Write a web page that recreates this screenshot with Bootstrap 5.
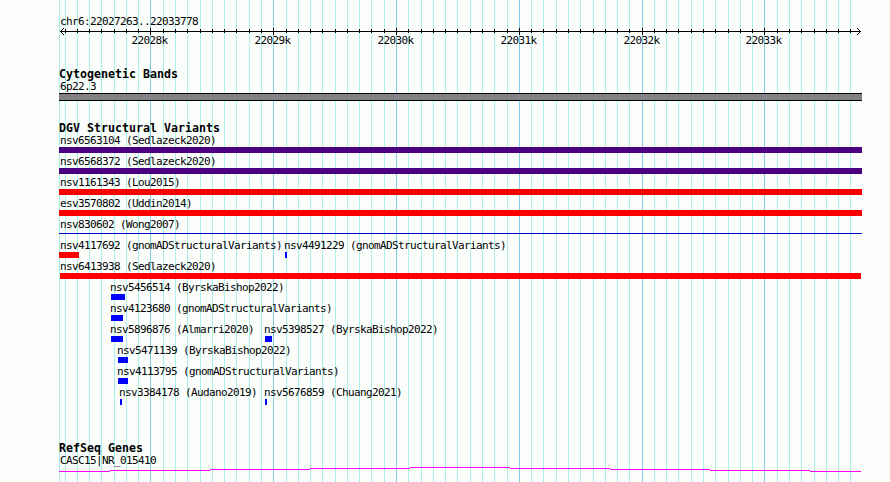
<!DOCTYPE html>
<html lang="en">
<head>
    <meta charset="UTF-8">
    <title>chr6:22027263..22033778</title>
    <meta name="viewport" content="width=device-width, initial-scale=1">
    <link href="https://cdn.jsdelivr.net/npm/bootstrap@5.3.0/dist/css/bootstrap.min.css" rel="stylesheet">
    <style>
        body {
            background-color: #fcfefc;
            font-family: "DejaVu Sans Mono", "Liberation Mono", monospace;
            font-size: 11px;
            line-height: 13px;
            letter-spacing: -0.622px;
            color: #000;
        }

        .browser {
            width: 890px;
            height: 482px;
        }

        .gridlines {
            z-index: -1;
        }

        .panel {
            padding-left: 59px;
            padding-top: 15px;
        }

        .region, .feature-name {
            white-space: pre;
            padding-left: 1px;
        }

        .ruler-art {
            height: 8px;
        }

        .ruler-art, .gene-line {
            margin-left: -59px;
        }

        .track-title {
            font-size: 11.6px;
            font-weight: bold;
            letter-spacing: 0.017px;
            height: 12px;
        }

        .lane {
            display: grid;
            height: 21px;
        }

        /* features of one lane share a single cell, shifted by their start */
        .lane > div, .scale > span {
            grid-area: 1 / 1;
        }

        .scale {
            display: grid;
            height: 13px;
            margin-top: -2px;
        }

        .ruler-block { height: 53px; }
        .cyto-block { height: 54px; }
        .dgv-block { height: 320px; }

        .band {
            width: 803px;
            height: 8px;
            background: #848284;
            border-top: 1px solid #000;
            border-bottom: 1px solid #000;
        }

        .glyph { height: 6px; }
        .gain { background: #0000ff; }
        .loss { background: #ff0000; }
        .complex { background: #4b0082; }
        .inversion {
            background: #0402c4;
            height: 1px;
            margin-top: 2px;
        }
    </style>
</head>
<body>
    <div class="browser position-relative overflow-hidden">
        <svg class="gridlines position-absolute top-0 start-0" id="gridlines" width="890" height="482" shape-rendering="crispEdges"></svg>

        <div class="panel">
            <div class="ruler-block">
                <div class="region">chr6:22027263..22033778</div>
                <svg class="ruler-art d-block" id="ruler" width="890" height="8" viewBox="0 28 890 8" shape-rendering="crispEdges"></svg>
                <div class="scale" id="scale"></div>
            </div>

            <div class="cyto-block">
                <div class="track-title">Cytogenetic Bands</div>
                <div class="feature-name">6p22.3</div>
                <div class="band"></div>
            </div>

            <div class="dgv-block">
                <div class="track-title">DGV Structural Variants</div>
                <div id="variants"></div>
            </div>

            <div>
                <div class="track-title">RefSeq Genes</div>
                <div class="feature-name">CASC15|NR_015410</div>
                <svg class="gene-line d-block" width="890" height="15" viewBox="0 467 890 15" shape-rendering="crispEdges">
                    <path fill="#ff00ff" d="M59 471h51v1h-51zM110 470h100v1h-100zM210 469h100v1h-100zM310 468h100v1h-100zM410 467h100v1h-100zM510 468h100v1h-100zM610 469h100v1h-100zM710 470h100v1h-100zM810 471h51v1h-51z"/>
                </svg>
            </div>
        </div>
    </div>

    <script src="https://cdn.jsdelivr.net/npm/bootstrap@5.3.0/dist/js/bootstrap.bundle.min.js"></script>
    <script>
        const left = 59;

        // Grid and ruler: one line per 100 bp, a major one per 1000 bp
        let minor = '<rect x="59" y="0" width="1" height="482" fill="#acf0ec"/>';
        let major = '';
        let ticks = '<path d="M60 31h801v1h-801z"/>';
        let labels = '';

        for (let i = -7; i <= 57; i++) {
            const x = Math.floor(150.97 + i * 12.279);
            if (i % 10 === 0) {
                major += `<rect x="${x}" y="0" width="1" height="482" fill="#84cee9"/>`;
                ticks += `<rect x="${x}" y="28" width="1" height="7"/>`;
                labels += `<span style="margin-left:${x - 18 - left - 0.5}px">${22028 + i / 10}k</span>`;
            } else {
                minor += `<rect x="${x}" y="0" width="1" height="482" fill="#acf0ec"/>`;
                ticks += `<rect x="${x}" y="29" width="1" height="4"/>`;
            }
        }
        ticks += '<path d="M61 30h1v3h-1zM62 29h1v1h-1zM62 33h1v1h-1zM63 28h1v1h-1zM63 34h1v1h-1z"/>';
        ticks += '<path d="M859 30h1v3h-1zM858 29h1v1h-1zM858 33h1v1h-1zM857 28h1v1h-1zM857 34h1v1h-1z"/>';

        document.getElementById('gridlines').innerHTML = minor + major;
        document.getElementById('ruler').innerHTML = ticks;
        document.getElementById('scale').innerHTML = labels;

        // name, type, start, width
        const lanes = [
            [['nsv6563104 (Sedlazeck2020)', 'complex', 59, 803]],
            [['nsv6568372 (Sedlazeck2020)', 'complex', 59, 803]],
            [['nsv1161343 (Lou2015)', 'loss', 59, 803]],
            [['esv3570802 (Uddin2014)', 'loss', 59, 803]],
            [['nsv830602 (Wong2007)', 'inversion', 59, 803]],
            [['nsv4117692 (gnomADStructuralVariants)', 'loss', 59, 20], ['nsv4491229 (gnomADStructuralVariants)', 'gain', 285, 2]],
            [['nsv6413938 (Sedlazeck2020)', 'loss', 60, 801]],
            [['nsv5456514 (ByrskaBishop2022)', 'gain', 111, 14]],
            [['nsv4123680 (gnomADStructuralVariants)', 'gain', 111, 12]],
            [['nsv5896876 (Almarri2020)', 'gain', 111, 12], ['nsv5398527 (ByrskaBishop2022)', 'gain', 265, 7]],
            [['nsv5471139 (ByrskaBishop2022)', 'gain', 118, 10]],
            [['nsv4113795 (gnomADStructuralVariants)', 'gain', 118, 10]],
            [['nsv3384178 (Audano2019)', 'gain', 120, 2], ['nsv5676859 (Chuang2021)', 'gain', 265, 2]]
        ];

        document.getElementById('variants').innerHTML = lanes.map(lane => `
            <div class="lane">
                ${lane.map(([name, type, start, width]) => {
                    const nameLeft = Math.max(0, start - left - 2);
                    return `
                    <div>
                        <div class="feature-name" style="margin-left:${nameLeft}px">${name}</div>
                        <div class="glyph ${type}" style="margin-left:${start - left}px;width:${width}px"></div>
                    </div>`;
                }).join('')}
            </div>`).join('');
    </script>
</body>
</html>
